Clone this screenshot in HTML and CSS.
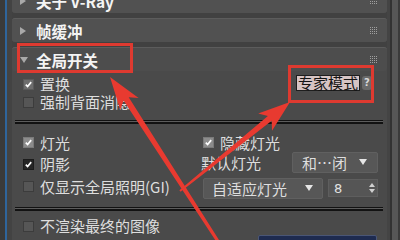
FILE: index.html
```html
<!DOCTYPE html>
<html lang="zh-CN">
<head>
    <meta charset="UTF-8">
    <title>V-Ray 全局开关</title>
    <link rel="stylesheet" href="styles.css">
</head>
<body>

<div class="app">
    <div class="side">
        <div class="side-dark"></div>
        <div class="side-blue"></div>
        <div class="side-gap"></div>
    </div>

    <div class="panel">
        <!-- 关于 V-Ray (cut off at the top) -->
        <div class="rollout rollout-cut">
            <div class="rollout-head">
                <span class="tri-right"></span>
                <span class="title">关于 V-Ray</span>
                <span class="grip"></span>
            </div>
        </div>

        <!-- 帧缓冲 -->
        <div class="rollout">
            <div class="rollout-head">
                <span class="tri-right"></span>
                <span class="title">帧缓冲</span>
                <span class="grip"></span>
            </div>
        </div>

        <!-- 全局开关 -->
        <div class="rollout rollout-open">
            <div class="rollout-head">
                <span class="tri-down"></span>
                <span class="title">全局开关</span>
                <span class="grip"></span>
            </div>
            <div class="rollout-body">
                <div class="row-top">
                    <label class="check check-mid">
                        <span class="box"><svg viewBox="0 0 11 11"><path d="M2.2 5.6 L4.4 8 L8.8 2.6"/></svg></span>
                        置换
                    </label>
                    <div class="expert">
                        <span class="btn-expert">专家模式</span>
                        <span class="help">?</span>
                    </div>
                </div>
                <label class="check row-plain">
                    <span class="box"></span>
                    强制背面消隐
                </label>

                <div class="sep sep-one"></div>

                <div class="opt-row row-a">
                    <div class="cell-left">
                        <label class="check check-light">
                            <span class="box"><svg viewBox="0 0 11 11"><path d="M2.2 5.6 L4.4 8 L8.8 2.6"/></svg></span>
                            灯光
                        </label>
                    </div>
                    <div class="cell-right">
                        <label class="check check-light">
                            <span class="box"><svg viewBox="0 0 11 11"><path d="M2.2 5.6 L4.4 8 L8.8 2.6"/></svg></span>
                            隐藏灯光
                        </label>
                    </div>
                </div>

                <div class="opt-row row-b">
                    <div class="cell-left">
                        <label class="check check-dark low">
                            <span class="box"><svg viewBox="0 0 11 11"><path d="M2.2 5.6 L4.4 8 L8.8 2.6"/></svg></span>
                            阴影
                        </label>
                    </div>
                    <div class="cell-right">
                        <span class="plain-label">默认灯光</span>
                        <div class="drop drop-off">
                            <span>和…闭</span>
                            <span class="drop-arrow"></span>
                        </div>
                    </div>
                </div>

                <div class="opt-row row-c">
                    <div class="cell-left">
                        <label class="check high">
                            <span class="box"></span>
                            仅显示全局照明(GI)
                        </label>
                    </div>
                    <div class="cell-right">
                        <div class="drop drop-lights">
                            <span>自适应灯光</span>
                            <span class="drop-arrow"></span>
                        </div>
                        <div class="spinner">
                            <span>8</span>
                            <span class="spin-arrows">
                                <span class="spin-up"></span>
                                <span class="spin-down"></span>
                            </span>
                        </div>
                    </div>
                </div>

                <div class="sep sep-two"></div>

                <label class="check row-last">
                    <span class="box"></span>
                    不渲染最终的图像
                </label>
                <div class="blue-field"></div>
            </div>
        </div>
    </div>

    <div class="scroll">
        <div class="scroll-gap"></div>
        <div class="scroll-line"></div>
        <div class="scroll-track"></div>
        <div class="scroll-edge"></div>
    </div>

    <!-- annotations -->
    <div class="mark mark-title"></div>
    <div class="mark mark-expert"></div>
    <svg class="arrows" viewBox="0 0 400 240" width="400" height="240">
        <polygon points="110,77 138.6,97.9 128.7,97.2 222.3,245.2 219.7,246.8 123.6,100.5 120.2,109.8"/>
        <polygon points="290,102 272,130.7 271.7,120.7 180.6,191.8 179.4,190.2 267.9,116 258.2,113.6"/>
    </svg>
</div>

</body>
</html>
```

FILE: styles.css
```css
* {
    box-sizing: border-box;
}
body {
    margin: 0;
    background: #454545;
    font-family: "Noto Sans CJK SC", "DejaVu Sans", sans-serif;
    color: #dcdcdc;
}
.app {
    position: relative;
    display: flex;
    width: 400px;
    height: 240px;
    overflow: hidden;
}

/* left edge */
.side {
    width: 12px;
    display: flex;
}
.side-dark {
    width: 5px;
    background: #3a3a3a;
}
.side-blue {
    width: 2px;
    background: #2f659c;
}
.side-gap {
    flex: 1;
    background: #434343;
}

/* rollouts */
.panel {
    width: 375px;
    display: flex;
    flex-direction: column;
    gap: 5px;
    background: #414141;
}
.rollout {
    background: #4a4a4a;
    border-radius: 3px;
}
.rollout-cut {
    margin-top: -12px;
}
.rollout-head {
    height: 24px;
    display: flex;
    align-items: center;
    padding: 0 9px 0 8px;
    background: #515151;
    border-radius: 3px;
    border-top: 1px solid #5c5c5c;
}
.rollout-cut .rollout-head {
    height: 25px;
}
.rollout-open .rollout-head {
    background: #4d4d4d;
}
.tri-right {
    width: 0;
    height: 0;
    border-left: 6px solid #a9a9a9;
    border-top: 4px solid transparent;
    border-bottom: 4px solid transparent;
    margin-right: 10px;
}
.tri-down {
    width: 0;
    height: 0;
    border-top: 6px solid #a9a9a9;
    border-left: 4px solid transparent;
    border-right: 4px solid transparent;
    margin-right: 8px;
}
.title {
    flex: 1;
    font-size: 15.5px;
    font-weight: bold;
    line-height: 16px;
    color: #f4f4f4;
}
.grip {
    width: 8px;
    height: 8px;
    background-image:
        linear-gradient(90deg, transparent 50%, #515151 50%),
        linear-gradient(#a0a0a0 50%, transparent 50%);
    background-size: 2px 2px;
}
.rollout-open .grip {
    background-image:
        linear-gradient(90deg, transparent 50%, #4d4d4d 50%),
        linear-gradient(#a0a0a0 50%, transparent 50%);
}

/* body of 全局开关 */
.rollout-body {
    padding: 0 9px 0 11px;
}
.check {
    display: flex;
    align-items: center;
    gap: 6px;
    font-size: 15px;
    line-height: 16px;
    color: #dedede;
    white-space: nowrap;
}
.box {
    width: 11px;
    height: 11px;
    flex: none;
    background: #565656;
    border: 1px solid #3c3c3c;
}
.box svg {
    display: block;
    width: 9px;
    height: 9px;
}
.box path {
    fill: none;
    stroke: #ffffff;
    stroke-width: 2;
}
.check-mid .box {
    background: #6d6d6d;
    border-color: #5a5a5a;
}
.check-light .box {
    background: #8c8c8c;
    border-color: #7a7a7a;
}
.check-dark .box {
    background: #262626;
    border-color: #1c1c1c;
}

.row-top {
    display: flex;
    justify-content: space-between;
    align-items: center;
    height: 22px;
    padding-right: 6px;
}
.row-top .check {
    align-self: flex-end;
    margin-bottom: 1px;
}
.expert {
    display: flex;
    align-items: center;
    gap: 2px;
    margin-top: 2px;
}
.btn-expert {
    height: 16px;
    padding: 0 1px;
    background: #d6c4c4;
    border: 1px solid #1e1e1e;
    color: #141414;
    font-size: 15px;
    line-height: 14px;
}
.help {
    width: 10px;
    height: 14px;
    background: #6a6a6a;
    border-radius: 3px;
    color: #d8d8d8;
    font-family: "DejaVu Sans", sans-serif;
    font-size: 10px;
    font-weight: bold;
    line-height: 14px;
    text-align: center;
}
.row-plain {
    height: 18px;
}

.sep {
    height: 4px;
    margin: 0 -5px 0 -8px;
    background: #5c5c5c;
    border-top: 1px solid #121212;
    border-bottom: 2px solid #121212;
}
.sep-one {
    margin-top: 9px;
}
.sep-two {
    margin-top: 8px;
}

.opt-row {
    display: flex;
    align-items: center;
}
.cell-left {
    width: 178px;
}
.cell-right {
    flex: 1;
    display: flex;
    align-items: center;
}
.row-a {
    height: 17px;
    margin-top: 10px;
}
.row-a .cell-right {
    padding-left: 2px;
}
.row-b {
    height: 22px;
}
.row-b .low {
    margin-top: 4px;
}
.plain-label {
    font-size: 15px;
    line-height: 16px;
    color: #dedede;
    margin-top: 2px;
}
.row-c {
    height: 22px;
    margin-top: 4px;
}
.row-c .high {
    margin-top: -3px;
}
.row-c .cell-right {
    padding-left: 2px;
}

.drop {
    display: flex;
    align-items: center;
    justify-content: space-between;
    height: 21px;
    background: #575757;
    border: 1px solid #606060;
    border-radius: 2px;
    font-size: 15px;
    color: #dedede;
}
.drop-off {
    width: 86px;
    margin-left: auto;
    padding: 0 10px 0 9px;
}
.drop-lights {
    width: 120px;
    padding: 0 9px 0 8px;
}
.drop-arrow {
    width: 0;
    height: 0;
    border-top: 6px solid #e6e6e6;
    border-left: 4px solid transparent;
    border-right: 4px solid transparent;
}
.spinner {
    display: flex;
    align-items: center;
    justify-content: space-between;
    width: 50px;
    height: 18px;
    margin-left: 5px;
    padding: 0 2px 0 5px;
    background: #555555;
    border: 1px solid #5e5e5e;
    font-family: "DejaVu Sans", sans-serif;
    font-size: 13px;
    color: #e2e2e2;
}
.spin-arrows {
    display: flex;
    flex-direction: column;
    gap: 2px;
}
.spin-up {
    border-bottom: 4px solid #d0d0d0;
    border-left: 3px solid transparent;
    border-right: 3px solid transparent;
}
.spin-down {
    border-top: 4px solid #d0d0d0;
    border-left: 3px solid transparent;
    border-right: 3px solid transparent;
}

.row-last {
    margin-top: 7px;
}
.blue-field {
    width: 119px;
    height: 12px;
    margin: 1px 0 0 235px;
    background: #1e2b50;
    border: 1px solid #4a5676;
    border-radius: 2px;
}

/* scrollbar strip */
.scroll {
    flex: 1;
    display: flex;
}
.scroll-gap {
    width: 3px;
    background: #444444;
}
.scroll-line {
    width: 2px;
    background: #333333;
}
.scroll-track {
    width: 6px;
    background: #575757;
}
.scroll-edge {
    flex: 1;
    background: #3b3b3b;
}

/* red annotations */
.mark {
    position: absolute;
    border: 3px solid #de3a30;
}
.mark-title {
    left: 17px;
    top: 43px;
    width: 116px;
    height: 30px;
}
.mark-expert {
    left: 288px;
    top: 65px;
    width: 86px;
    height: 38px;
}
.arrows {
    position: absolute;
    left: 0;
    top: 0;
    pointer-events: none;
}
.arrows polygon {
    fill: #e83a30;
}
```
